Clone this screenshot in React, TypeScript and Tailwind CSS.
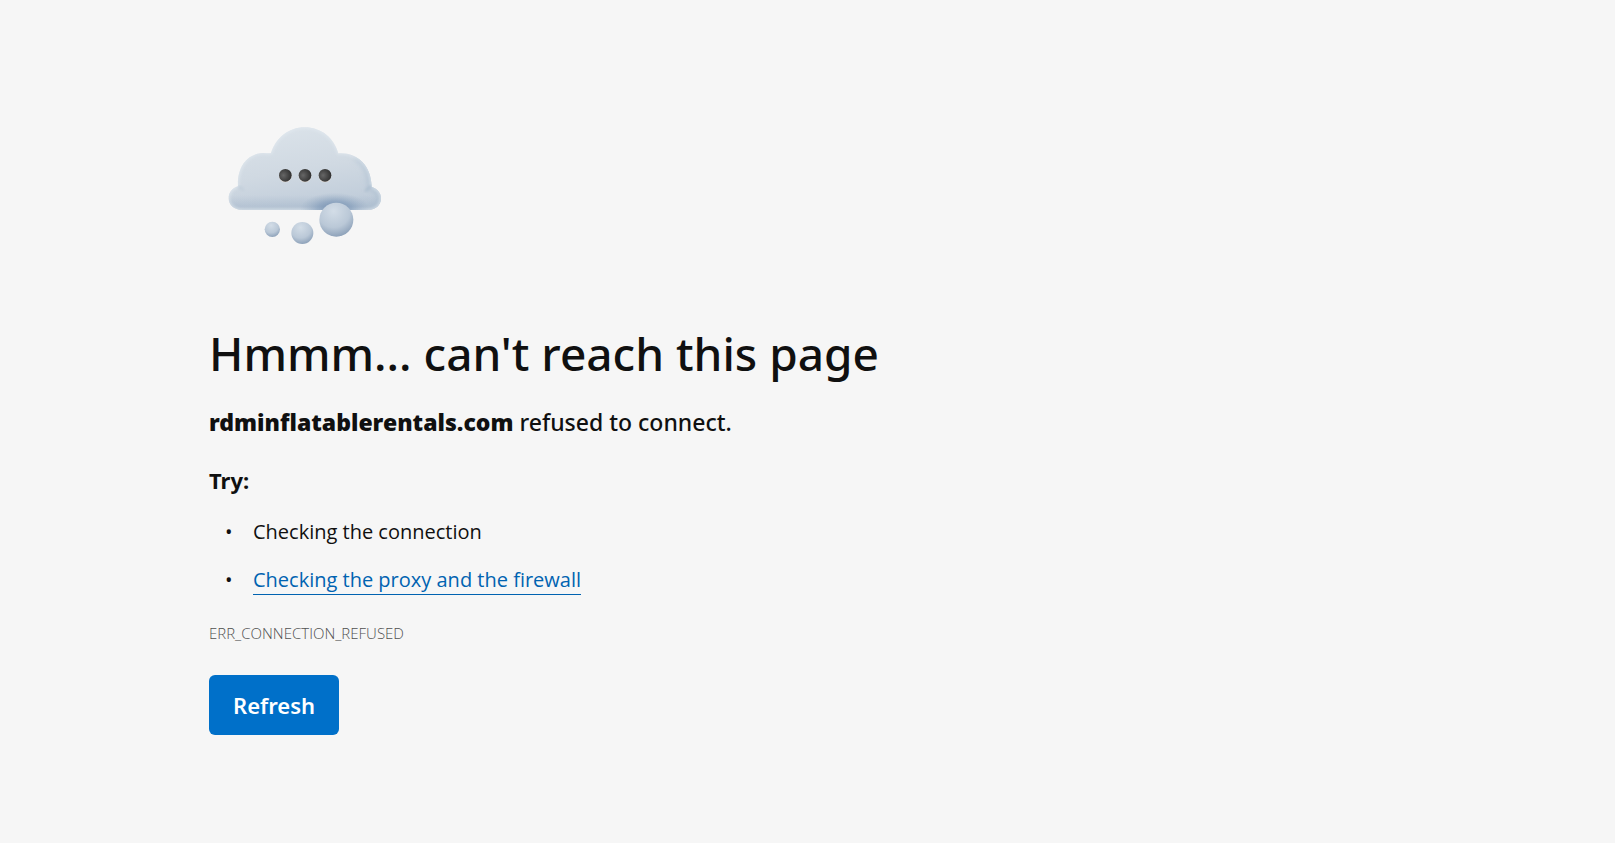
import React from 'react';

const CLOUD_PATH =
  'M96 300 C74 300 56 286 56 265 C56 247 67 234 84 229 C81 170 112 130 160 129 C169 129 176 131 183 129 C198 84 235 52 284 52 C334 52 372 84 385 130 C438 126 484 162 485 231 C503 237 513 249 513 265 C513 286 496 300 474 300 Z';

const CloudIcon: React.FC = () => (
  <svg viewBox="-3 0 570 450" className="w-[190px] h-[150px]" aria-hidden="true">
    <defs>
      <linearGradient id="cloud" x1="0.35" y1="0" x2="0.65" y2="1">
        <stop offset="0" stopColor="#dae2e9" />
        <stop offset="0.5" stopColor="#d0d9e2" />
        <stop offset="1" stopColor="#becbd9" />
      </linearGradient>
      <linearGradient id="base" x1="0" y1="0" x2="0" y2="1">
        <stop offset="0" stopColor="#8fa5be" stopOpacity="0" />
        <stop offset="0.75" stopColor="#8fa5be" stopOpacity="0.3" />
        <stop offset="1" stopColor="#b5c3d1" stopOpacity="0.5" />
      </linearGradient>
      <radialGradient id="ball" cx="0.42" cy="0.25" r="0.8">
        <stop offset="0" stopColor="#d3dde7" />
        <stop offset="0.6" stopColor="#bac8d7" />
        <stop offset="1" stopColor="#879cb5" />
      </radialGradient>
      <radialGradient id="eye" cx="0.35" cy="0.5" r="0.65">
        <stop offset="0" stopColor="#666666" />
        <stop offset="0.5" stopColor="#4a4a4a" />
        <stop offset="1" stopColor="#303030" />
      </radialGradient>
      <radialGradient id="shade">
        <stop offset="0" stopColor="#6482a6" stopOpacity="0.85" />
        <stop offset="0.5" stopColor="#7390b2" stopOpacity="0.5" />
        <stop offset="1" stopColor="#8fa5be" stopOpacity="0" />
      </radialGradient>
      <clipPath id="cloudClip">
        <path d={CLOUD_PATH} />
      </clipPath>
      <filter id="wide" x="-40%" y="-40%" width="180%" height="180%">
        <feGaussianBlur stdDeviation="9" />
      </filter>
      <filter id="soft" x="-30%" y="-30%" width="160%" height="160%">
        <feGaussianBlur stdDeviation="4" />
      </filter>
      <filter id="edge" x="-5%" y="-5%" width="110%" height="110%">
        <feGaussianBlur stdDeviation="1.2" />
      </filter>
    </defs>

    <g filter="url(#edge)">
      <path d={CLOUD_PATH} fill="url(#cloud)" />
      <g clipPath="url(#cloudClip)">
        <rect x="50" y="255" width="470" height="46" fill="url(#base)" />
        <path d="M440 138 C470 155 485 190 485 231 C503 237 513 249 513 265 C513 286 496 300 474 300" fill="none" stroke="#adbfd0" strokeWidth="18" filter="url(#wide)" />
        <path d={CLOUD_PATH} fill="none" stroke="#e4ebf1" strokeWidth="5" filter="url(#soft)" />
        <path d="M487 229 C478 231 472 236 466 244" fill="none" stroke="#a9bbcd" strokeWidth="6" filter="url(#soft)" />
        <path d="M84 229 C91 231 97 235 101 241" fill="none" stroke="#bccad7" strokeWidth="5" filter="url(#soft)" />
        <ellipse cx="374" cy="296" rx="104" ry="48" fill="url(#shade)" />
      </g>
    </g>

    {/* Dots */}
    <circle cx="226" cy="198" r="19" fill="#e6e1dc" />
    <circle cx="285" cy="198" r="19" fill="#e6e1dc" />
    <circle cx="345" cy="198" r="19" fill="#e6e1dc" />
    <circle cx="226" cy="196" r="19" fill="url(#eye)" />
    <circle cx="285" cy="196" r="19" fill="url(#eye)" />
    <circle cx="345" cy="196" r="19" fill="url(#eye)" />

    {/* Drops */}
    <circle cx="187" cy="358" r="23" fill="url(#ball)" />
    <circle cx="277" cy="369" r="33" fill="url(#ball)" />
    <circle cx="379" cy="329" r="51" fill="url(#ball)" />
  </svg>
);

const App: React.FC = () => {
  return (
    <div className="min-h-screen bg-[#f6f6f6] text-[#101010] font-['Noto_Sans','Open_Sans',sans-serif]">
      <main className="max-w-[1197px] mx-auto pt-[110px] pb-12">
        <CloudIcon />

        <h1 className="mt-16 text-[46px] leading-[58px] font-medium">Hmmm... can't reach this page</h1>
        <p className="mt-6 text-[23px] leading-8 font-medium">
          <strong className="font-black">rdminflatablerentals.com</strong> refused to connect.
        </p>

        <h2 className="mt-7 text-[22px] leading-7 font-bold">Try:</h2>
        <ul className="mt-6 flex flex-col gap-5 text-[20px] leading-7 font-['Open_Sans','Noto_Sans',sans-serif]">
          <li className="flex">
            <span className="w-11 pl-4" aria-hidden="true">•</span>
            <span>Checking the connection</span>
          </li>
          <li className="flex">
            <span className="w-11 pl-4" aria-hidden="true">•</span>
            <a href="#proxy" className="text-[#0063b1] border-b border-[#0063b1]">
              Checking the proxy and the firewall
            </a>
          </li>
        </ul>

        <p className="mt-7 text-[15px] leading-5 font-light text-[#505050] font-['Open_Sans','Noto_Sans',sans-serif]">
          ERR_CONNECTION_REFUSED
        </p>

        <button type="button" className="mt-8 h-[60px] px-6 rounded-md bg-[#0070c9] text-white text-[22px] font-semibold">
          Refresh
        </button>
      </main>
    </div>
  );
};

export default App;
